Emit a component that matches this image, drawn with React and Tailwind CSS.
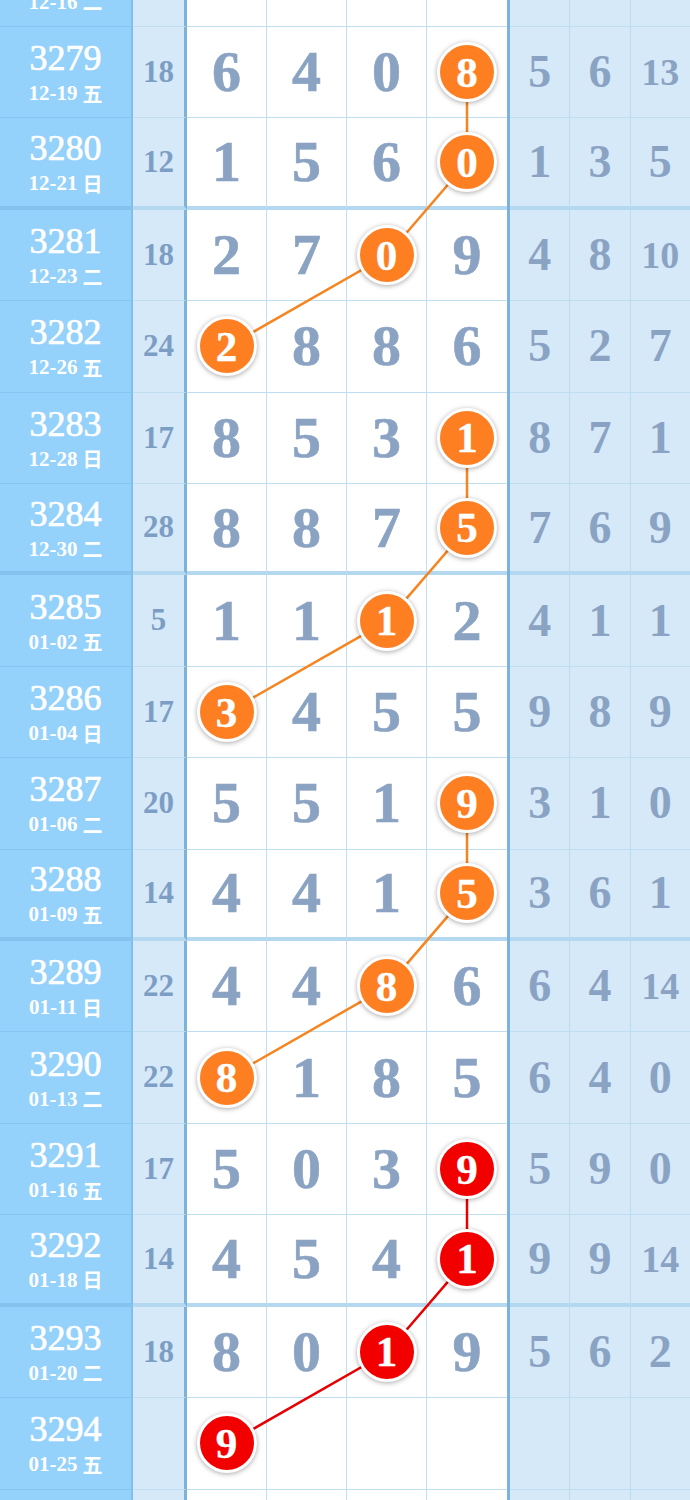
import React from "react";

const H = 91.42;
const rows = [
  { n: "3278", d: "12-16", w: "二", s: "", g: ["", "", "", ""], r: ["", "", ""] },
  { n: "3279", d: "12-19", w: "五", s: "18", g: ["6", "4", "0", "8"], r: ["5", "6", "13"], c: 3, col: "o" },
  { n: "3280", d: "12-21", w: "日", s: "12", g: ["1", "5", "6", "0"], r: ["1", "3", "5"], c: 3, col: "o" },
  { n: "3281", d: "12-23", w: "二", s: "18", g: ["2", "7", "0", "9"], r: ["4", "8", "10"], c: 2, col: "o" },
  { n: "3282", d: "12-26", w: "五", s: "24", g: ["2", "8", "8", "6"], r: ["5", "2", "7"], c: 0, col: "o" },
  { n: "3283", d: "12-28", w: "日", s: "17", g: ["8", "5", "3", "1"], r: ["8", "7", "1"], c: 3, col: "o" },
  { n: "3284", d: "12-30", w: "二", s: "28", g: ["8", "8", "7", "5"], r: ["7", "6", "9"], c: 3, col: "o" },
  { n: "3285", d: "01-02", w: "五", s: "5", g: ["1", "1", "1", "2"], r: ["4", "1", "1"], c: 2, col: "o" },
  { n: "3286", d: "01-04", w: "日", s: "17", g: ["3", "4", "5", "5"], r: ["9", "8", "9"], c: 0, col: "o" },
  { n: "3287", d: "01-06", w: "二", s: "20", g: ["5", "5", "1", "9"], r: ["3", "1", "0"], c: 3, col: "o" },
  { n: "3288", d: "01-09", w: "五", s: "14", g: ["4", "4", "1", "5"], r: ["3", "6", "1"], c: 3, col: "o" },
  { n: "3289", d: "01-11", w: "日", s: "22", g: ["4", "4", "8", "6"], r: ["6", "4", "14"], c: 2, col: "o" },
  { n: "3290", d: "01-13", w: "二", s: "22", g: ["8", "1", "8", "5"], r: ["6", "4", "0"], c: 0, col: "o" },
  { n: "3291", d: "01-16", w: "五", s: "17", g: ["5", "0", "3", "9"], r: ["5", "9", "0"], c: 3, col: "r" },
  { n: "3292", d: "01-18", w: "日", s: "14", g: ["4", "5", "4", "1"], r: ["9", "9", "14"], c: 3, col: "r" },
  { n: "3293", d: "01-20", w: "二", s: "18", g: ["8", "0", "1", "9"], r: ["5", "6", "2"], c: 2, col: "r" },
  { n: "3294", d: "01-25", w: "五", s: "", g: ["9", "", "", ""], r: ["", "", ""], c: 0, col: "r" },
  { n: "", d: "", w: "", s: "", g: ["", "", "", ""], r: ["", "", ""] },
];

const isThick = (i) => {
  const n = parseInt(rows[i].n || "0", 10);
  return n && (n - 3276) % 4 === 0;
};

function Circle({ v, color }) {
  return (
    <div
      className={
        color === "r"
          ? "relative z-20 flex h-[60px] w-[60px] items-center justify-center rounded-full border-[3px] border-white bg-[#f20000] shadow-[0_1px_5px_rgba(0,0,0,0.35)]"
          : "relative z-20 flex h-[60px] w-[60px] items-center justify-center rounded-full border-[3px] border-white bg-[#fd7f22] shadow-[0_1px_5px_rgba(0,0,0,0.35)]"
      }
    >
      <span className="text-[43px] font-bold leading-none text-white [-webkit-text-stroke:0.4px_white]">{v}</span>
    </div>
  );
}

function Row({ row, i }) {
  const thick = isThick(i);
  const leftB = thick ? "border-b-4 border-b-[#84c3ee]" : "border-b border-b-[#86c6f1]";
  const midB = thick ? "border-b-4 border-b-[#b3d8ef]" : "border-b border-b-[#bfdef1]";
  return (
    <div className="flex h-[91.42px]">
      <div className={`flex w-[133px] flex-col items-center justify-center border-r-2 border-r-[#80bfeb] bg-[#94d1fb] text-white ${leftB}`}>
        <div className="text-[36px] leading-none [-webkit-text-stroke:0.7px_white]">{row.n}</div>
        <div className="mt-[7px] flex items-center text-[21px] font-bold leading-none">
          <span>{row.d}</span>
          <span className="ml-[5px] font-['Noto_Sans_CJK_SC',sans-serif] text-[20px] font-bold">{row.w}</span>
        </div>
      </div>
      <div className={`flex w-[54px] items-center justify-center border-r-[3px] border-r-[#7cb3db] bg-[#d6e9f9] text-[31px] font-bold text-[#7d9ec4] ${midB}`}>
        {row.s}
      </div>
      {row.g.map((v, k) => (
        <div
          key={k}
          className={`flex w-[80px] items-center justify-center bg-white ${midB} ${k < 3 ? "border-r border-r-[#c2e0f2]" : ""}`}
        >
          {row.c === k ? (
            <Circle v={v} color={row.col} />
          ) : (
            <span className="text-[58px] font-bold leading-none text-[#8ba3c3] [-webkit-text-stroke:0.6px_#8ba3c3]">{v}</span>
          )}
        </div>
      ))}
      <div className="flex flex-1 border-l-[3px] border-l-[#7cb3db]">
        {row.r.map((v, k) => (
          <div
            key={k}
            className={`flex flex-1 items-center justify-center bg-[#d6e9f9] ${midB} ${k < 2 ? "border-r border-r-[#b9dcf1]" : ""} ${
              v.length > 1 ? "text-[38px]" : "text-[46px]"
            } font-bold leading-none text-[#8ba3c3]`}
          >
            {v}
          </div>
        ))}
      </div>
    </div>
  );
}

export default function App() {
  const pts = rows.map((row, i) => {
    if (row.c === undefined) return null;
    const b = isThick(i) ? 4 : 1;
    return { x: 187 + 40 + 80 * row.c, y: i * H + (H - b) / 2, col: row.col };
  });
  const lines = [];
  for (let i = 1; i < rows.length; i++) {
    const n = parseInt(rows[i].n || "0", 10);
    if (!pts[i] || !pts[i - 1]) continue;
    if ((n - 3279) % 4 === 0) continue;
    lines.push({ a: pts[i - 1], b: pts[i], col: pts[i].col });
  }
  return (
    <div className="relative h-[1500px] w-[690px] overflow-hidden bg-white font-['Liberation_Serif',serif]">
      <div className="relative -mt-[64.42px]">
        {rows.map((row, i) => (
          <Row key={i} row={row} i={i} />
        ))}
        <svg className="pointer-events-none absolute left-0 top-0 z-10" width="690" height={rows.length * H}>
          {lines.map((l, k) => (
            <line
              key={k}
              x1={l.a.x}
              y1={l.a.y}
              x2={l.b.x}
              y2={l.b.y}
              stroke={l.col === "r" ? "#e60000" : "#f6841f"}
              strokeWidth="2.5"
            />
          ))}
        </svg>
      </div>
    </div>
  );
}
